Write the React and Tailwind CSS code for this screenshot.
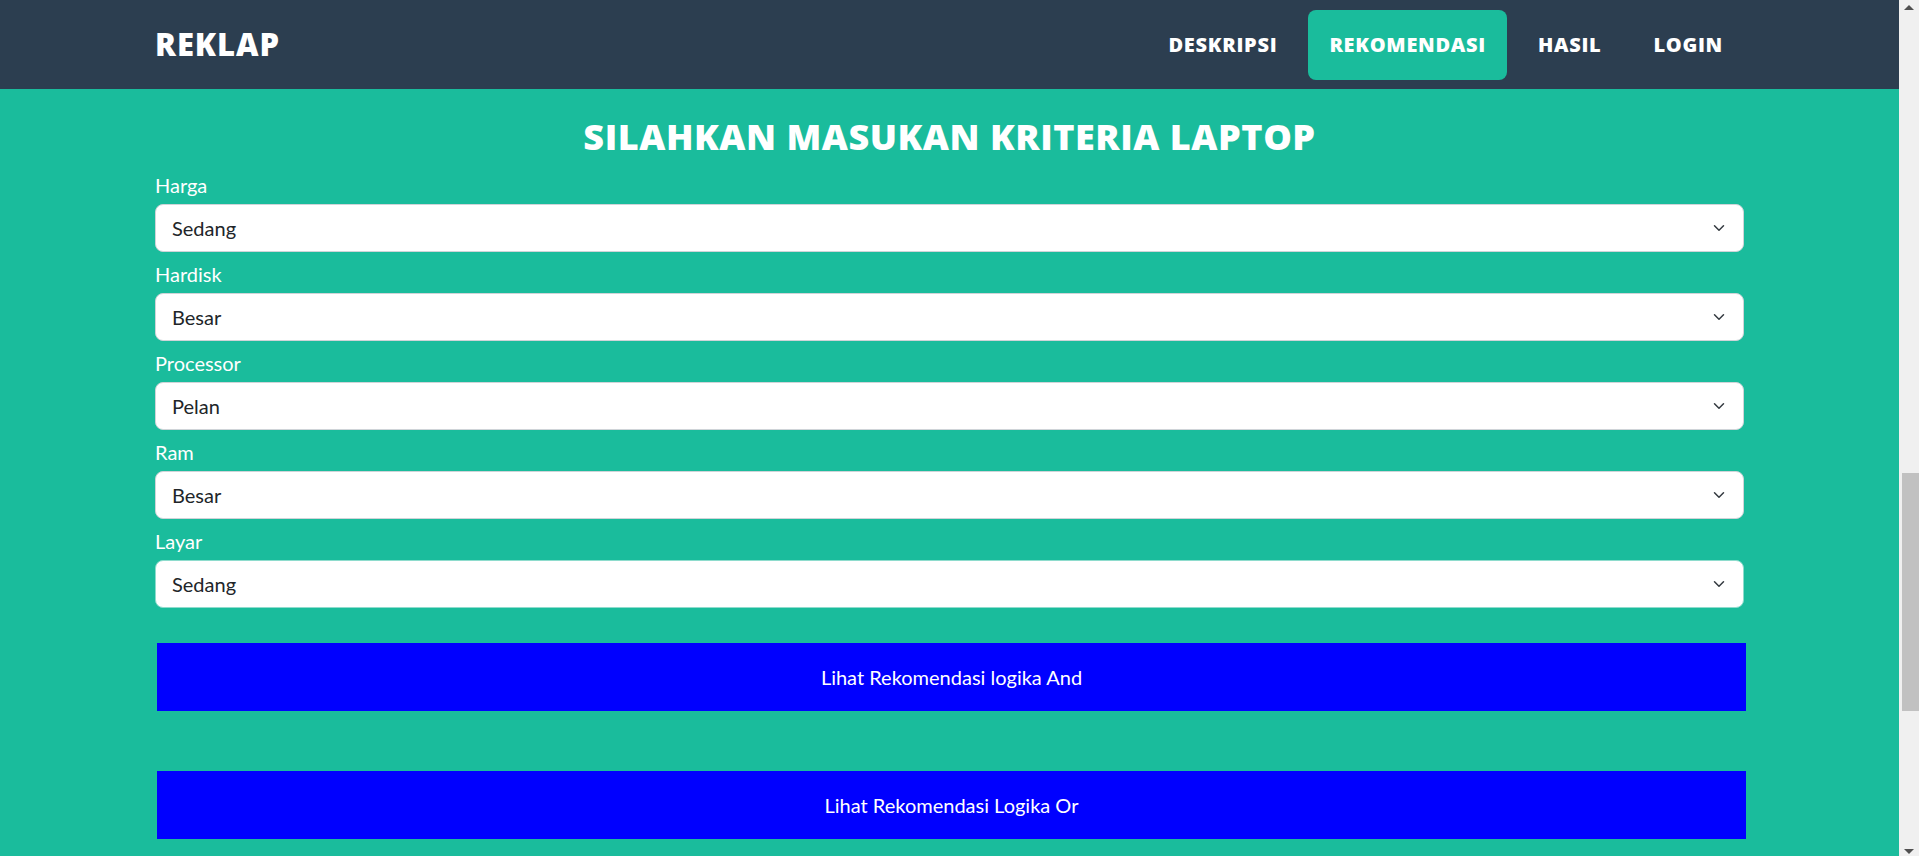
const brand = { fontFamily: '"Open Sans", "Liberation Sans", sans-serif' };
const body = { fontFamily: 'Lato, "Open Sans", sans-serif' };

const navItems = ['DESKRIPSI', 'REKOMENDASI', 'HASIL', 'LOGIN'];

const fields = [
  { label: 'Harga', value: 'Sedang' },
  { label: 'Hardisk', value: 'Besar' },
  { label: 'Processor', value: 'Pelan' },
  { label: 'Ram', value: 'Besar' },
  { label: 'Layar', value: 'Sedang', focused: true },
];

function Chevron() {
  return (
    <svg width="16" height="12" viewBox="0 0 16 16" fill="none" className="shrink-0">
      <path d="m2 5 6 6 6-6" stroke="#343a40" strokeWidth="2" strokeLinecap="round" strokeLinejoin="round" />
    </svg>
  );
}

function SelectBox({ value, focused }) {
  return (
    <div
      className={`flex h-[48px] items-center justify-between rounded-lg border bg-white pl-4 pr-4 text-[20px] text-[#212529] ${
        focused ? 'border-[#8edccd]' : 'border-[#cfd4d8]'
      }`}
    >
      <span>{value}</span>
      <Chevron />
    </div>
  );
}

export default function App() {
  return (
    <div className="flex h-[856px] w-full overflow-hidden bg-[#1abc9c]">
      <div className="flex min-w-0 flex-1 flex-col">
        <header className="flex h-[89px] shrink-0 items-center justify-between bg-[#2c3e50] px-[155px]">
          <span style={brand} className="text-[31px] font-extrabold tracking-[0.03em] text-white">
            REKLAP
          </span>
          <nav className="flex items-center gap-[10px]">
            {navItems.map((item) => (
              <a
                key={item}
                style={brand}
                className={`flex h-[70px] items-center rounded-lg px-[21px] text-[20px] font-extrabold tracking-[0.035em] text-white ${
                  item === 'REKOMENDASI' ? 'bg-[#1abc9c]' : ''
                }`}
              >
                {item}
              </a>
            ))}
          </nav>
        </header>

        <main style={body} className="px-[155px] pt-[26px]">
          <h2
            style={brand}
            className="text-center text-[36px] font-extrabold leading-[1.2] tracking-[0.015em] text-white"
          >
            SILAHKAN MASUKAN KRITERIA LAPTOP
          </h2>

          <form className="mt-[12px]">
            {fields.map((field, i) => (
              <div key={field.label} className={i === 0 ? '' : 'mt-[7px]'}>
                <label className="mb-1 block text-[20px] leading-[30px] text-white">{field.label}</label>
                <SelectBox value={field.value} focused={field.focused} />
              </div>
            ))}

            <button
              type="button"
              className="ml-0.5 mt-[35px] flex h-[68px] w-full items-center justify-center bg-[#0000ff] text-[20px] text-white"
            >
              Lihat Rekomendasi logika And
            </button>
            <button
              type="button"
              className="ml-0.5 mt-[60px] flex h-[68px] w-full items-center justify-center bg-[#0000ff] text-[20px] text-white"
            >
              Lihat Rekomendasi Logika Or
            </button>
          </form>
        </main>
      </div>

      {/* scrollbar strip */}
      <div className="flex w-[20px] shrink-0 flex-col items-center bg-[#f0f0f0]">
        <div className="mt-[5px] h-0 w-0 border-x-[5px] border-b-[5px] border-x-transparent border-b-[#505050]" />
        <div className="mt-[463px] h-[238px] w-[17px] self-end bg-[#c1c1c1]" />
        <div className="mt-auto mb-[2px] h-0 w-0 border-x-[5px] border-t-[5px] border-x-transparent border-t-[#505050]" />
      </div>
    </div>
  );
}
